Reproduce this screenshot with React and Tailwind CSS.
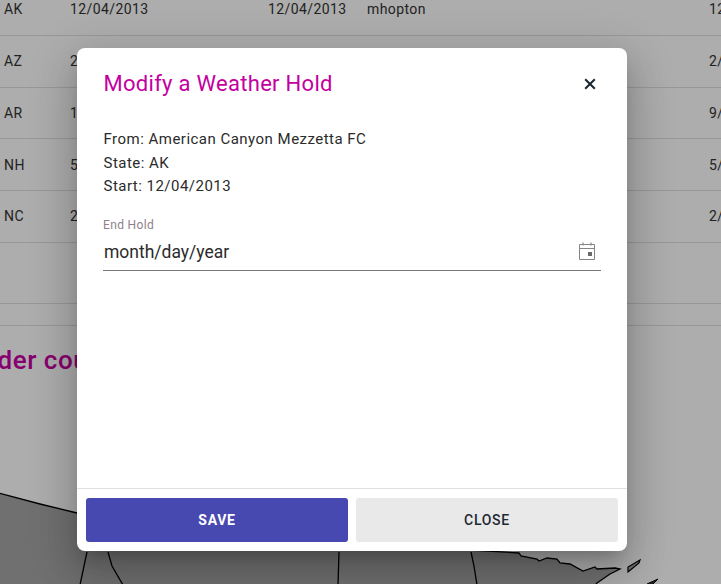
import * as React from 'react';

const rows = [
  { state: 'AK', start: '12/04/2013', end: '12/04/2013', user: 'mhopton', last: '12/04/2013' },
  { state: 'AZ', start: '2/11/2014', end: '2/11/2014', user: 'mhopton', last: '2/11/2014' },
  { state: 'AR', start: '1/15/2015', end: '9/15/2015', user: 'mhopton', last: '9/15/2015' },
  { state: 'NH', start: '5/02/2016', end: '5/02/2016', user: 'mhopton', last: '5/02/2016' },
  { state: 'NC', start: '2/20/2017', end: '2/20/2017', user: 'mhopton', last: '2/20/2017' },
];

const CalendarIcon = () => (
  <svg width="18" height="18" viewBox="0 0 18 18" fill="none" className="block">
    <path d="M1.5 2.5H16.5V17.5H1.5Z" stroke="#858585" strokeWidth="1" />
    <path d="M1.5 6.5H16.5" stroke="#858585" strokeWidth="1" />
    <path d="M5 0.5V3.5M13 0.5V3.5" stroke="#858585" strokeWidth="1.2" />
    <rect x="10" y="10" width="4" height="4" fill="#6a6a6a" />
  </svg>
);

const CloseIcon = () => (
  <svg width="12" height="12" viewBox="0 0 12 12" fill="none" className="block">
    <path d="M1.2 1.2L10.8 10.8M10.8 1.2L1.2 10.8" stroke="#1b2530" strokeWidth="2" />
  </svg>
);

const MapDrawing = () => (
  <svg width="721" height="259" viewBox="0 325 721 259" className="block absolute top-0 left-0">
    <path
      d="M-5 491L40 503L77 512L200 530L400 545L519 552L521 555L537 558L539 560L547 557L557 558L560 562L570 563L583 570L595 566L597 568L615 567L620 568L610 573L597 582L590 590L-5 590Z"
      fill="#a6a6a6"
      stroke="#000"
      strokeWidth="1.3"
    />
    <path d="M87 551L80 584M108 551L112 565L123 584M339 551L338 584M471 551L474 565L477 584" stroke="#000" strokeWidth="1.3" fill="none" />
    <path d="M640 559L628 566L628 571L639 562Z" fill="#a6a6a6" stroke="#000" strokeWidth="1.2" />
    <path d="M658 578L647 583L646 590L652 584Z" fill="#333333" stroke="#000" strokeWidth="1" />
  </svg>
);

export default function App() {
  return (
    <div className="relative w-[721px] h-[584px] overflow-hidden bg-white font-['Roboto',sans-serif]">
      <div className="mt-[-16px]">
        {rows.map((row) => (
          <div
            key={row.state}
            className="grid grid-cols-[66px_198px_99px_342px_16px] items-center h-[51.75px] pl-1 border-b border-[#e1e1e1] text-sm tracking-[0.4px] text-[#333333] whitespace-nowrap"
          >
            <span>{row.state}</span>
            <span>{row.start}</span>
            <span>{row.end}</span>
            <span>{row.user}</span>
            <span>{row.last}</span>
          </div>
        ))}
      </div>
      <div className="h-[61px] border-b border-[#e1e1e1]" />
      <div className="h-[21px]" />

      <div className="relative h-[259px] border-t border-[#e1e1e1]">
        <MapDrawing />
        <h2 className="relative ml-[-44px] pt-[18px] text-[26px] leading-8 tracking-[0.5px] font-medium text-[#c800a1] whitespace-nowrap">
          Border counties
        </h2>
      </div>

      {/* dimmed backdrop and dialog */}
      <div className="absolute inset-0 bg-black/32 pl-[77px] pt-[48px]">
        <div className="flex flex-col w-[550px] h-[503px] rounded-lg bg-white shadow-[0_11px_15px_-7px_rgba(0,0,0,0.2),0_24px_38px_3px_rgba(0,0,0,0.14),0_9px_46px_8px_rgba(0,0,0,0.12)]">
          <div className="flex-1 pl-[26px] pr-[26px]">
            <div className="flex items-center justify-between pt-[20px] pr-[5px]">
              <h1 className="pl-[0.5px] text-[22px] leading-8 tracking-[0.29px] text-[#c4009f]">Modify a Weather Hold</h1>
              <button className="p-0">
                <CloseIcon />
              </button>
            </div>
            <div className="mt-[28px] pl-[0.5px] text-[15px] leading-[23.5px] tracking-[0.48px] text-[#2b2b2b]">
              <p>From: American Canyon Mezzetta FC</p>
              <p>State: AK</p>
              <p>Start: 12/04/2013</p>
            </div>
            <label className="block mt-[18px] text-xs leading-4 tracking-[0.35px] text-[#8f7f8b]">End Hold</label>
            <div className="flex items-center justify-between h-[36px] mt-[2px] border-b border-[#777777] pr-[5px] w-[498px]">
              <span className="text-[17.5px] leading-6 pl-px text-[#2b2b2b]">month/day/year</span>
              <span className="pb-[3px]">
                <CalendarIcon />
              </span>
            </div>
          </div>
          <div className="flex gap-2 h-[63px] p-[9px] border-t border-[#e0e0e0]">
            <button className="flex-1 rounded-[3px] bg-[#4748b0] text-sm font-bold tracking-[0.7px] text-white">SAVE</button>
            <button className="flex-1 rounded-[3px] bg-[#e9e9e9] text-sm font-medium tracking-[0.7px] text-[#1f2933]">CLOSE</button>
          </div>
        </div>
      </div>
    </div>
  );
}
